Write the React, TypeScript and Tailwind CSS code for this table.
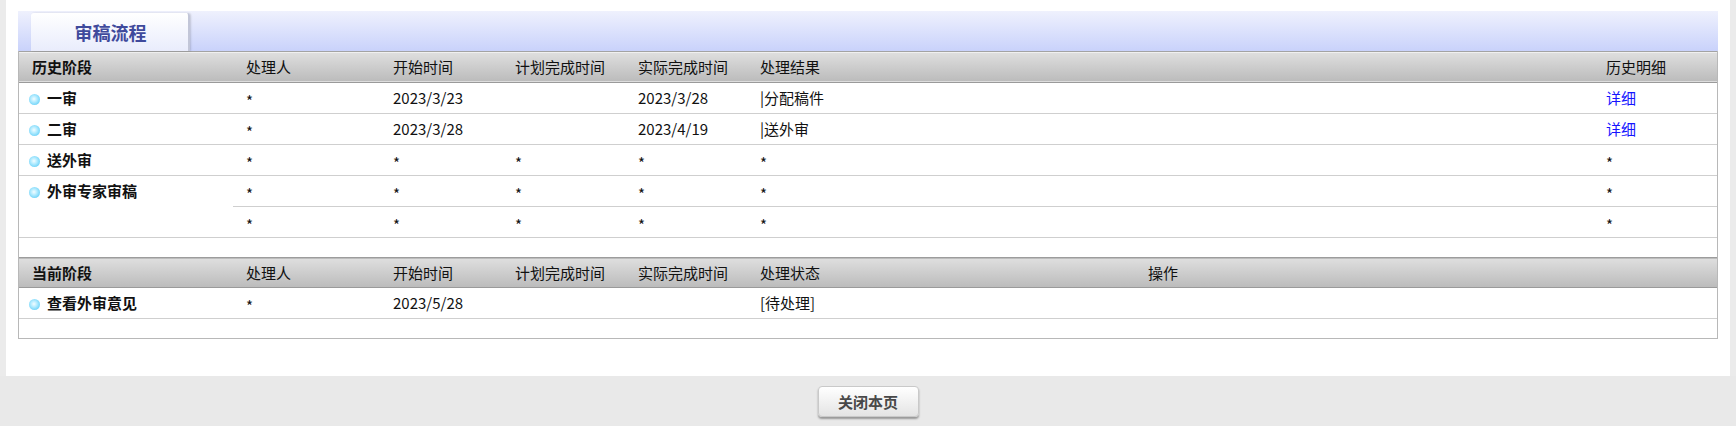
import React from 'react';

const font = { fontFamily: '"Microsoft YaHei", "Noto Sans CJK SC", "Noto Sans", sans-serif' };

type Row = { stage?: string; span?: number; cells: string[]; last?: string };

const history: Row[] = [
  { stage: '一审', cells: ['*', '2023/3/23', '', '2023/3/28', '|分配稿件'], last: '详细' },
  { stage: '二审', cells: ['*', '2023/3/28', '', '2023/4/19', '|送外审'], last: '详细' },
  { stage: '送外审', cells: ['*', '*', '*', '*', '*'], last: '*' },
  { stage: '外审专家审稿', span: 2, cells: ['*', '*', '*', '*', '*'], last: '*' },
  { cells: ['*', '*', '*', '*', '*'], last: '*' },
];

function Bullet() {
  return (
    <span className="inline-block w-[11px] h-[11px] rounded-full mr-[7px] align-[-1px] bg-[radial-gradient(circle_at_45%_45%,#f4fdff_0%,#b5ecff_35%,#6fd3f8_75%,#58c6f2_100%)]" />
  );
}

// the asterisk of the CJK font sits high, push it down a bit
function Val({ v }: { v: string }) {
  return v === '*' ? <span className="relative top-[3px]">*</span> : <>{v}</>;
}

function HeadCell({ children, bold }: { children?: React.ReactNode; bold?: boolean }) {
  return (
    <th className={`text-left pl-[13px] text-[15px] text-[#111] ${bold ? 'font-bold' : 'font-normal'}`}>{children}</th>
  );
}

export default function App() {
  return (
    <div className="w-full h-[426px] bg-[#ebebeb] text-[15px] leading-[22px] text-[#111]" style={font}>
      <div className="mx-[6px] h-[376px] bg-white pt-[11px] px-[12px]">
        {/* tab bar */}
        <div className="h-[40px] bg-gradient-to-b from-[#eff1fd] to-[#c9d2fb] flex items-end">
          <div className="ml-[13px] w-[159px] h-[38px] rounded-t-[3px] bg-gradient-to-b from-white to-[#e9ecfc] border-r-2 border-[#c2c6d8] shadow-[1px_0_2px_rgba(0,0,0,0.15)] flex items-center justify-center">
            <span className="text-[18px] font-bold text-[#3f4a9c] pl-[2px]">审稿流程</span>
          </div>
        </div>

        <div className="border border-t-0 border-[#b8b8b8]">
          <div className="h-[1px] bg-[#a3a3a3]" />
          <div className="h-[1px] bg-[#f0f0f0]" />
          <table className="w-full table-fixed border-collapse">
            <colgroup>
              <col className="w-[214px]" />
              <col className="w-[147px]" />
              <col className="w-[122px]" />
              <col className="w-[123px]" />
              <col className="w-[122px]" />
              <col />
              <col className="w-[124px]" />
            </colgroup>
            <thead>
              <tr className="h-[29px] bg-gradient-to-b from-[#dedede] to-[#bcbcbc] border-b border-[#9a9a9a]">
                <HeadCell bold>历史阶段</HeadCell>
                <HeadCell>处理人</HeadCell>
                <HeadCell>开始时间</HeadCell>
                <HeadCell>计划完成时间</HeadCell>
                <HeadCell>实际完成时间</HeadCell>
                <HeadCell>处理结果</HeadCell>
                <HeadCell>历史明细</HeadCell>
              </tr>
            </thead>
            <tbody>
              {history.map((r, i) => (
                <tr key={i} className="h-[31px]">
                  {r.stage && (
                    <td rowSpan={r.span ?? 1} className="align-top pl-[10px] pt-[4px] font-bold border-b border-[#cfcfcf]">
                      <Bullet />
                      {r.stage}
                    </td>
                  )}
                  {r.cells.map((c, j) => (
                    <td key={j} className="pl-[13px] border-b border-[#cfcfcf]"><Val v={c} /></td>
                  ))}
                  <td className={`pl-[13px] border-b border-[#cfcfcf] ${r.last === '详细' ? 'text-[#1414ff]' : ''}`}>
                    <Val v={r.last ?? ''} />
                  </td>
                </tr>
              ))}
              <tr className="h-[20px]">
                <td colSpan={7} />
              </tr>
            </tbody>
          </table>

          <table className="w-full table-fixed border-collapse">
            <colgroup>
              <col className="w-[214px]" />
              <col className="w-[147px]" />
              <col className="w-[122px]" />
              <col className="w-[123px]" />
              <col className="w-[122px]" />
              <col className="w-[388px]" />
              <col />
            </colgroup>
            <thead>
              <tr className="h-[30px] bg-gradient-to-b from-[#dedede] to-[#bcbcbc] border-y border-t-[#9c9c9c] border-b-[#9a9a9a]">
                <HeadCell bold>当前阶段</HeadCell>
                <HeadCell>处理人</HeadCell>
                <HeadCell>开始时间</HeadCell>
                <HeadCell>计划完成时间</HeadCell>
                <HeadCell>实际完成时间</HeadCell>
                <HeadCell>处理状态</HeadCell>
                <HeadCell>操作</HeadCell>
              </tr>
            </thead>
            <tbody>
              <tr className="h-[31px] border-b border-[#cfcfcf]">
                <td className="pl-[10px] font-bold">
                  <Bullet />
                  查看外审意见
                </td>
                <td className="pl-[13px]"><Val v="*" /></td>
                <td className="pl-[13px]">2023/5/28</td>
                <td className="pl-[13px]"></td>
                <td className="pl-[13px]"></td>
                <td className="pl-[13px]">[待处理]</td>
                <td className="pl-[13px]"></td>
              </tr>
              <tr className="h-[19px]">
                <td colSpan={7} />
              </tr>
            </tbody>
          </table>
        </div>
      </div>

      <div className="h-[50px] bg-[#e9e9e9] flex justify-center pt-[10px]">
        <button className="w-[101px] h-[31px] rounded-[4px] border border-[#c9c9c9] bg-gradient-to-b from-white to-[#e4e4e4] shadow-[0_2px_2px_rgba(0,0,0,0.35)] text-[15px] font-bold text-[#484848]">
          关闭本页
        </button>
      </div>
    </div>
  );
}
